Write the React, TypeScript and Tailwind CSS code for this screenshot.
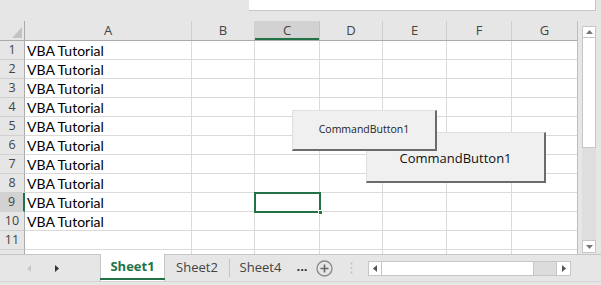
import React from 'react'

const cols = [
  { name: 'A', w: 'w-[167px]' },
  { name: 'B', w: 'w-[63px]' },
  { name: 'C', w: 'w-[65px]' },
  { name: 'D', w: 'w-[63px]' },
  { name: 'E', w: 'w-[64px]' },
  { name: 'F', w: 'w-[65px]' },
  { name: 'G', w: 'w-[66px]' },
]

const rows = [1, 2, 3, 4, 5, 6, 7, 8, 9, 10, 11]

function Cell({ w, text }: { w: string; text?: string }) {
  return (
    <div className={`${w} h-full shrink-0 border-r border-b border-[#dadada] bg-white pl-[2px] flex items-center text-[14px] text-black font-['Lato',sans-serif] whitespace-nowrap`}>
      {text}
    </div>
  )
}

export default function App() {
  return (
    <div className="w-[601px] h-[285px] bg-[#e6e6e6] overflow-hidden flex flex-col font-['Open_Sans',sans-serif]">
      {/* formula bar remains */}
      <div className="h-[21px] shrink-0">
        <div className="ml-[249px] w-[347px] h-[11px] bg-white border-r border-b border-[#c6c6c6]" />
      </div>

      <div className="flex h-[233px] shrink-0">
        {/* grid */}
        <div className="relative w-[578px] shrink-0 overflow-hidden border-r border-[#bdbdbd]">
          <div className="flex h-[20px] border-b border-[#ababab]">
            <div className="w-[25px] shrink-0 relative border-r border-[#ababab]">
              <svg className="absolute left-[12px] top-[6px]" width="10" height="11" viewBox="0 0 10 11">
                <polygon points="10,0 10,11 0,11" fill="#c3c3c3" />
              </svg>
            </div>
            {cols.map((c) => (
              <div
                key={c.name}
                className={`${c.w} shrink-0 flex items-center justify-center text-[13px] text-[#444] border-r ${
                  c.name === 'C'
                    ? 'bg-[#d2d2d2] border-[#c3c3c3] shadow-[inset_0_-2px_0_#217346]'
                    : 'border-[#cfcfcf]'
                }`}
              >
                {c.name}
              </div>
            ))}
          </div>
          {rows.map((r) => (
            <div key={r} className="flex h-[19px]">
              <div
                className={`w-[25px] shrink-0 flex items-center justify-center text-[12.5px] text-[#444] border-b border-[#d0d0d0] ${
                  r === 9 ? 'bg-[#d2d2d2] border-r-2 border-r-[#217346]' : 'border-r border-r-[#ababab]'
                }`}
              >
                {r}
              </div>
              {cols.map((c) => (
                <Cell key={c.name} w={c.w} text={c.name === 'A' && r <= 10 ? 'VBA Tutorial' : undefined} />
              ))}
            </div>
          ))}
          {/* partly visible next row */}
          <div className="flex h-[4px]">
            <div className="w-[25px] shrink-0 border-r border-[#ababab]" />
            {cols.map((c) => (
              <div key={c.name} className={`${c.w} shrink-0 border-r border-[#dadada] bg-white`} />
            ))}
          </div>

          {/* selected cell C9 */}
          <div className="absolute left-[254px] top-[171px] w-[67px] h-[21px] border-2 border-[#217346]" />
          <div className="absolute left-[318px] top-[189px] w-[5px] h-[5px] bg-[#217346] border border-white" />

          {/* ActiveX buttons */}
          <div className="absolute left-[366px] top-[111px] w-[180px] h-[51px] bg-[#f0f0f0] border-t border-l border-[#e0e0e0] border-r-2 border-b-2 border-r-[#6b6b6b] border-b-[#6b6b6b] flex items-center justify-center pt-[4px] text-[13px] text-[#111] font-['Open_Sans',sans-serif]">
            CommandButton1
          </div>
          <div className="absolute left-[292px] top-[89px] w-[145px] h-[41px] bg-[#f0f0f0] border-t border-l border-[#e0e0e0] border-r-2 border-b-2 border-r-[#6b6b6b] border-b-[#6b6b6b] flex items-center justify-center text-[10.5px] text-[#222] font-['Open_Sans',sans-serif]">
            CommandButton1
          </div>
        </div>

        {/* vertical scrollbar */}
        <div className="ml-[4px] w-[14px] flex flex-col pt-[5px] pb-[1px]">
          <div className="h-[12px] bg-white border border-[#c6c6c6] flex items-center justify-center">
            <svg width="7" height="4" viewBox="0 0 7 4"><polygon points="0,4 7,4 3.5,0" fill="#777" /></svg>
          </div>
          <div className="h-[110px] bg-white border-x border-b border-[#c6c6c6]" />
          <div className="flex-1 bg-[#dedede]" />
          <div className="h-[13px] bg-white border border-[#c6c6c6] flex items-center justify-center">
            <svg width="7" height="4" viewBox="0 0 7 4"><polygon points="0,0 7,0 3.5,4" fill="#777" /></svg>
          </div>
        </div>
      </div>

      {/* sheet tabs */}
      <div className="h-[28px] shrink-0 flex items-stretch border-t border-[#c6c6c6] border-b border-b-[#d4d4d4]">
        <div className="w-[100px] shrink-0 relative">
          <svg className="absolute left-[27px] top-[10px]" width="4" height="7" viewBox="0 0 4 7"><polygon points="4,0 4,7 0,3.5" fill="#c8c8c8" /></svg>
          <svg className="absolute left-[55px] top-[10px]" width="4" height="7" viewBox="0 0 4 7"><polygon points="0,0 0,7 4,3.5" fill="#333" /></svg>
        </div>
        <div className="w-[65px] shrink-0 -mt-px bg-white border-x border-[#c6c6c6] flex flex-col">
          <div className="flex-1 flex items-center justify-center pt-[1px] text-[13px] font-bold text-[#217346]">Sheet1</div>
          <div className="h-[2px] mx-[-1px] bg-[#217346] mb-[1px]" />
        </div>
        <div className="w-[64px] shrink-0 flex items-center justify-center text-[13px] text-[#444]">Sheet2</div>
        <div className="w-px bg-[#c6c6c6] my-[4px]" />
        <div className="w-[61px] shrink-0 flex items-center justify-center text-[13px] text-[#444]">Sheet4</div>
        <div className="w-[22px] shrink-0 flex items-center justify-center text-[13px] font-bold text-[#333] pb-[3px]">...</div>
        <div className="w-[23px] shrink-0 flex items-center justify-center">
          <svg width="17" height="17" viewBox="0 0 17 17">
            <circle cx="8.5" cy="8.5" r="7.5" fill="none" stroke="#888" strokeWidth="1.3" />
            <path d="M8.5 4.5v8M4.5 8.5h8" stroke="#666" strokeWidth="1.6" />
          </svg>
        </div>
        <div className="w-[30px] shrink-0 flex items-center justify-center">
          <svg width="3" height="12" viewBox="0 0 3 12">
            <circle cx="1.5" cy="1.5" r="1" fill="#c0c0c0" />
            <circle cx="1.5" cy="6" r="1" fill="#c0c0c0" />
            <circle cx="1.5" cy="10.5" r="1" fill="#c0c0c0" />
          </svg>
        </div>
        {/* horizontal scrollbar */}
        <div className="ml-[2px] w-[203px] shrink-0 flex items-center">
          <div className="h-[15px] w-full flex">
            <div className="w-[14px] bg-white border border-[#c6c6c6] flex items-center justify-center">
              <svg width="4" height="7" viewBox="0 0 4 7"><polygon points="4,0 4,7 0,3.5" fill="#555" /></svg>
            </div>
            <div className="w-[152px] bg-white border-y border-r border-[#c6c6c6]" />
            <div className="flex-1 bg-[#dcdcdc] border-y border-[#c6c6c6]" />
            <div className="w-[15px] bg-white border border-[#c6c6c6] flex items-center justify-center">
              <svg width="4" height="7" viewBox="0 0 4 7"><polygon points="0,0 0,7 4,3.5" fill="#555" /></svg>
            </div>
          </div>
        </div>
      </div>
    </div>
  )
}
